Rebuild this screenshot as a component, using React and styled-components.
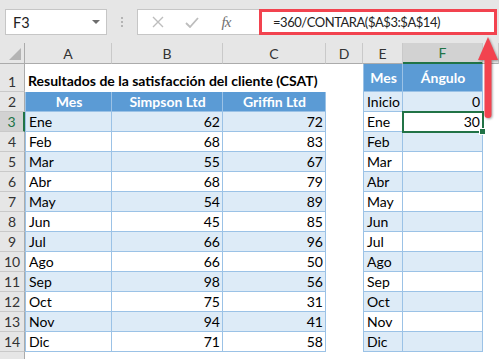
import React from 'react';
import styled, { createGlobalStyle, css } from 'styled-components';

const GlobalStyle = createGlobalStyle`
  html, body {
    margin: 0;
    padding: 0;
    width: 499px;
    height: 359px;
    overflow: hidden;
    background: #ffffff;
  }
`;

const Sheet = styled.div`
  position: relative;
  width: 499px;
  height: 359px;
  overflow: hidden;
  font-family: Lato, 'Liberation Sans', sans-serif;
`;

const TopBar = styled.div`
  height: 43px;
  box-sizing: border-box;
  background: #e6e6e6;
  display: flex;
  align-items: flex-start;
  padding: 9px 2px 0 5px;
`;

const NameBox = styled.div`
  width: 102px;
  height: 26px;
  box-sizing: border-box;
  background: #fff;
  border: 1px solid #c6c6c6;
  display: flex;
  align-items: center;
  justify-content: space-between;
  padding: 0 6px 0 7px;
  font-family: Lato, 'Noto Sans', sans-serif;
  font-size: 14.5px;
  color: #222;
`;

const Caret = styled.span`
  width: 0;
  height: 0;
  border-left: 4px solid transparent;
  border-right: 4px solid transparent;
  border-top: 4px solid #6d6d6d;
`;

const Grip = styled.div`
  width: 30px;
  height: 26px;
  display: flex;
  flex-direction: column;
  align-items: center;
  justify-content: center;
  gap: 2px;
`;

const GripDot = styled.span`
  width: 2px;
  height: 2px;
  background: #b4b4b4;
`;

const FormulaBar = styled.div`
  flex: 1;
  height: 26px;
  box-sizing: border-box;
  background: #fff;
  border: 1px solid #c6c6c6;
  border-right: none;
  display: flex;
  align-items: stretch;
`;

const Tools = styled.div`
  width: 111px;
  display: flex;
  align-items: center;
  padding-left: 10px;
  gap: 14px;
`;

const ToolIcon = styled.span`
  width: 20px;
  display: flex;
  justify-content: center;
  align-items: center;
  color: ${(p) => p.$color || '#bdbdbd'};
`;

const Fx = styled.span`
  font-family: 'Liberation Serif', serif;
  font-style: italic;
  font-size: 15px;
  color: #6f6f6f;
  letter-spacing: -1px;
`;

const FormulaInput = styled.div`
  flex: 1;
  margin: -1px 0 -1px 0;
  box-sizing: border-box;
  border: 3px solid #f2434f;
  display: flex;
  align-items: center;
  padding-left: 11px;
  font-family: Lato, 'Noto Sans', sans-serif;
  font-size: 13px;
  letter-spacing: -0.45px;
  color: #222;
`;

const Grid = styled.div`
  display: grid;
  grid-template-columns: 25px 87px 111px 103px 37px 40px 80px 1fr;
  grid-template-rows: 21px 28px repeat(14, 20px);
  font-size: 14px;
  color: #000;
`;

const Corner = styled.div`
  background: #e6e6e6;
  border-right: 1px solid #ababab;
  border-bottom: 1px solid #ababab;
  box-sizing: border-box;
  display: flex;
  align-items: flex-end;
  justify-content: flex-end;
  padding: 0 3px 3px 0;
`;

const CornerMark = styled.span`
  width: 0;
  height: 0;
  border-left: 12px solid transparent;
  border-bottom: 12px solid #b4b4b4;
`;

const ColHead = styled.div`
  box-sizing: border-box;
  background: ${(p) => (p.$active ? '#d2d2d2' : '#e6e6e6')};
  color: ${(p) => (p.$active ? '#217346' : '#333')};
  border-right: 1px solid #c9c9c9;
  border-bottom: ${(p) => (p.$active ? '2px solid #217346' : '1px solid #ababab')};
  display: flex;
  align-items: center;
  justify-content: center;
  font-size: 14px;
`;

const RowHead = styled.div`
  box-sizing: border-box;
  background: ${(p) => (p.$active ? '#d2d2d2' : '#e6e6e6')};
  color: ${(p) => (p.$active ? '#217346' : '#333')};
  border-right: ${(p) => (p.$active ? '2px solid #217346' : '1px solid #ababab')};
  border-bottom: 1px solid #c9c9c9;
  display: flex;
  align-items: flex-end;
  justify-content: center;
  padding-bottom: 1px;
  font-size: 14px;
`;

const tableCell = css`
  border-right: 1px solid #9bc2e6;
  border-bottom: 1px solid #9bc2e6;
  ${(p) => p.$first && 'border-left: 1px solid #9bc2e6;'}
`;

const Cell = styled.div`
  box-sizing: border-box;
  position: relative;
  display: flex;
  align-items: ${(p) => (p.$middle ? 'center' : 'flex-end')};
  padding: 0 2px 1px 3px;
  white-space: nowrap;
  justify-content: ${(p) =>
    p.$align === 'right' ? 'flex-end' : p.$align === 'center' ? 'center' : 'flex-start'};
  font-weight: ${(p) => (p.$bold ? 700 : 400)};
  ${(p) => p.$span && `grid-column: span ${p.$span};`}
  ${(p) =>
    p.$kind === 'head' &&
    css`
      background: #5b9bd5;
      color: #fff;
      ${tableCell}
    `}
  ${(p) =>
    p.$kind === 'stripe' &&
    css`
      background: #ddebf7;
      ${tableCell}
    `}
  ${(p) =>
    p.$kind === 'plain' &&
    css`
      background: #fff;
      ${tableCell}
    `}
  ${(p) =>
    p.$selected &&
    css`
      z-index: 2;
      outline: 2px solid #217346;
      outline-offset: -1px;
      &::after {
        content: '';
        position: absolute;
        right: -4px;
        bottom: -4px;
        width: 5px;
        height: 5px;
        background: #217346;
        border: 1px solid #fff;
      }
    `}
`;

const Arrow = styled.svg`
  position: absolute;
  left: 474px;
  top: 34px;
  filter: drop-shadow(1px 1px 1px rgba(0, 0, 0, 0.35));
  z-index: 5;
`;

const months = [
  ['Ene', 62, 72],
  ['Feb', 68, 83],
  ['Mar', 55, 67],
  ['Abr', 68, 79],
  ['May', 54, 89],
  ['Jun', 45, 85],
  ['Jul', 66, 96],
  ['Ago', 66, 50],
  ['Sep', 98, 56],
  ['Oct', 75, 31],
  ['Nov', 94, 41],
  ['Dic', 71, 58],
];

const cols = ['A', 'B', 'C', 'D', 'E', 'F', ''];

const angleRows = [['Inicio', '0'], ...months.map((m, i) => [m[0], i === 0 ? '30' : ''])];

const App = () => {
  const rows = [];

  // fila 1: título y cabecera de la tabla de ángulos
  rows.push(
    <React.Fragment key="r1">
      <RowHead>1</RowHead>
      <Cell $span={3} $bold $middle style={{ paddingTop: 6 }}>
        Resultados de la satisfacción del cliente (CSAT)
      </Cell>
      <Cell />
      <Cell $kind="head" $first $bold $align="center" $middle>
        Mes
      </Cell>
      <Cell $kind="head" $bold $align="center" $middle>
        Ángulo
      </Cell>
      <Cell />
    </React.Fragment>
  );

  for (let r = 2; r <= 15; r++) {
    const left =
      r === 2
        ? { kind: 'head', vals: ['Mes', 'Simpson Ltd', 'Griffin Ltd'] }
        : r <= 14
        ? { kind: r % 2 ? 'stripe' : 'plain', vals: months[r - 3] }
        : null;
    const right = r <= 14 ? { kind: r % 2 ? 'plain' : 'stripe', vals: angleRows[r - 2] } : null;
    rows.push(
      <React.Fragment key={r}>
        <RowHead $active={r === 3}>{r < 15 ? r : ''}</RowHead>
        {left ? (
          left.vals.map((v, i) => (
            <Cell
              key={i}
              $kind={left.kind}
              $first={i === 0}
              $bold={left.kind === 'head'}
              $align={left.kind === 'head' ? 'center' : i > 0 ? 'right' : 'left'}
            >
              {v}
            </Cell>
          ))
        ) : (
          <>
            <Cell />
            <Cell />
            <Cell />
          </>
        )}
        <Cell />
        {right ? (
          <>
            <Cell $kind={right.kind} $first>
              {right.vals[0]}
            </Cell>
            <Cell $kind={right.kind} $align="right" $selected={r === 3}>
              {right.vals[1]}
            </Cell>
          </>
        ) : (
          <>
            <Cell />
            <Cell />
          </>
        )}
        <Cell />
      </React.Fragment>
    );
  }

  return (
    <Sheet>
      <GlobalStyle />
      <TopBar>
        <NameBox>
          F3
          <Caret />
        </NameBox>
        <Grip>
          <GripDot />
          <GripDot />
          <GripDot />
        </Grip>
        <FormulaBar>
          <Tools>
            <ToolIcon>
              <svg width="12" height="12" viewBox="0 0 12 12">
                <path d="M1 1 L11 11 M11 1 L1 11" stroke="currentColor" strokeWidth="1.4" />
              </svg>
            </ToolIcon>
            <ToolIcon>
              <svg width="14" height="11" viewBox="0 0 14 11">
                <path d="M1 6 L5 10 L13 1" stroke="currentColor" strokeWidth="1.8" fill="none" />
              </svg>
            </ToolIcon>
            <ToolIcon>
              <Fx>fx</Fx>
            </ToolIcon>
          </Tools>
          <FormulaInput>=360/CONTARA($A$3:$A$14)</FormulaInput>
        </FormulaBar>
      </TopBar>
      <Grid>
        <Corner>
          <CornerMark />
        </Corner>
        {cols.map((c, i) => (
          <ColHead key={i} $active={c === 'F'}>
            {c}
          </ColHead>
        ))}
        {rows}
      </Grid>
      <Arrow width="26" height="90" viewBox="0 0 26 90">
        <path d="M14 3 L24 26 L4 26 Z" fill="#f2434f" />
        <path d="M10.5 24 L17.5 24 L17.5 81 Q17.5 84 14 84 Q10.5 84 10.5 81 Z" fill="#f2434f" />
      </Arrow>
    </Sheet>
  );
};

export default App;
